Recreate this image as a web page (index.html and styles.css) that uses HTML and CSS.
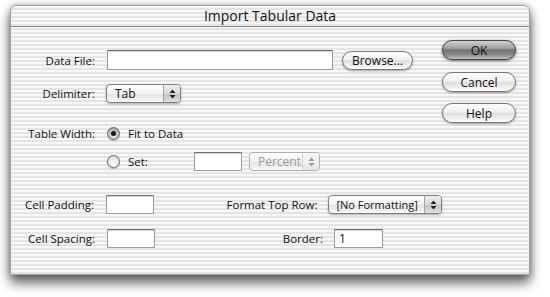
FILE: index.html
```html
<!DOCTYPE html>
<html>
<head>
<meta charset="utf-8">
<link rel="stylesheet" href="styles.css">
</head>
<body>
<div class="window">
  <div class="titlebar">Import Tabular Data</div>
  <div class="content">
    <div class="form">
      <div class="row r1">
        <span class="label">Data File:</span>
        <span class="field wide"></span>
        <span class="btn browse">Browse...</span>
      </div>
      <div class="row r2">
        <span class="label">Delimiter:</span>
        <span class="popup delim"><span class="ptext">Tab</span><span class="arrows"><svg width="7" height="10" viewBox="0 0 7 10"><path d="M3.5 0.5 L6.5 4 L0.5 4 Z M0.5 6 L6.5 6 L3.5 9.5 Z" fill="#222"/></svg></span></span>
      </div>
      <div class="row r3">
        <span class="label">Table Width:</span>
        <span class="radio on"></span>
        <span class="rtext">Fit to Data</span>
      </div>
      <div class="row r4">
        <span class="label"></span>
        <span class="radio"></span>
        <span class="rtext settext">Set:</span>
        <span class="field small"></span>
        <span class="popup pct disabled"><span class="ptext">Percent</span><span class="arrows"><svg width="7" height="10" viewBox="0 0 7 10"><path d="M3.5 0.5 L6.5 4 L0.5 4 Z M0.5 6 L6.5 6 L3.5 9.5 Z" fill="#999"/></svg></span></span>
      </div>
      <div class="row r5">
        <span class="label">Cell Padding:</span>
        <span class="field small"></span>
        <span class="label2">Format Top Row:</span>
        <span class="popup fmt"><span class="ptext">[No Formatting]</span><span class="arrows"><svg width="7" height="10" viewBox="0 0 7 10"><path d="M3.5 0.5 L6.5 4 L0.5 4 Z M0.5 6 L6.5 6 L3.5 9.5 Z" fill="#222"/></svg></span></span>
      </div>
      <div class="row r6">
        <span class="label">Cell Spacing:</span>
        <span class="field small"></span>
        <span class="label2 lb">Border:</span>
        <span class="field small val">1</span>
      </div>
    </div>
    <div class="buttons">
      <span class="btn big default">OK</span>
      <span class="btn big cancel">Cancel</span>
      <span class="btn big help">Help</span>
    </div>
  </div>
</div>
</body>
</html>
```
FILE: styles.css
```css
* { box-sizing: border-box; }
html, body { margin: 0; padding: 0; background: #fff; }
body {
  width: 550px; height: 297px; overflow: hidden;
  font-family: "Open Sans", "DejaVu Sans", sans-serif;
  font-size: 11.5px; color: #111;
}
.window {
  margin: 5px 0 0 10px;
  width: 520px; height: 270px;
  border: 1px solid #a0a0a0;
  border-radius: 6px 6px 0 0;
  background: repeating-linear-gradient(to bottom, #f7f7f7 0 2px, #e4e4e4 2px 4px);
  box-shadow: 0 8px 12px rgba(0,0,0,0.6), 0 0 7px rgba(0,0,0,0.3);
}
.titlebar {
  height: 21px;
  border-bottom: 1px solid #8a8a8a;
  text-align: center;
  font-size: 14px;
  line-height: 20px;
  color: #111;
}
.content { display: flex; padding-left: 9px; }
.form { width: 422px; display: flex; flex-direction: column; }
.row { display: flex; align-items: center; height: 19px; }
.r1 { margin-top: 23px; height: 20px; }
.r2 { margin-top: 14px; }
.r3 { margin-top: 21px; }
.r4 { margin-top: 9px; }
.r5 { margin-top: 24px; }
.r6 { margin-top: 15px; }
.label { width: 75px; text-align: right; margin-right: 12px; white-space: nowrap; }
.label2 { width: 166px; text-align: right; margin-right: 11px; white-space: nowrap; }
.lb { width: 168px; }
.field {
  display: block; height: 19px; background: #fff;
  border: 1px solid #9c9c9c; border-top-color: #6f6f6f;
  box-shadow: inset 0 1px 1px rgba(0,0,0,0.18);
  padding: 1px 4px; line-height: 15px; font-size: 12px;
}
.wide { width: 226px; height: 20px; }
.small { width: 48px; }
.r4 .small { margin-left: 46px; }
.r6 .val { width: 49px; }
.btn {
  display: flex; align-items: center; justify-content: center;
  border: 1px solid #777; border-radius: 10px;
  background: linear-gradient(to bottom, #fdfdfd 0%, #f0f0f0 45%, #dedede 52%, #f2f2f2 85%, #ffffff 100%);
  box-shadow: 0 1px 2px rgba(0,0,0,0.35);
  color: #111;
}
.browse { width: 71px; height: 19px; margin-left: 9px; font-size: 12px; }
.buttons { width: 74px; display: flex; flex-direction: column; padding-top: 13px; }
.big { height: 20px; font-size: 12px; }
.cancel { margin-top: 12px; }
.help { margin-top: 11px; }
.default {
  border-color: #444;
  background: linear-gradient(to bottom, #cfcfcf 0%, #a0a0a0 40%, #747474 52%, #888 75%, #c0c0c0 100%);
  box-shadow: 0 1px 3px rgba(0,0,0,0.55);
}
.popup {
  display: flex; height: 19px;
  border: 1px solid #7f7f7f; border-radius: 4px;
  background: linear-gradient(to bottom, #ffffff 0%, #f2f2f2 50%, #e4e4e4 55%, #f8f8f8 100%);
  box-shadow: 0 1px 2px rgba(0,0,0,0.3);
  overflow: hidden;
}
.ptext { flex: 1; padding-left: 8px; line-height: 17px; font-size: 12px; white-space: nowrap; }
.fmt .ptext { padding-left: 7px; font-size: 11px; }
.arrows {
  width: 17px; border-left: 1px solid #a5a5a5;
  display: flex; align-items: center; justify-content: center;
  background: linear-gradient(to bottom, #eeeeee 0%, #d8d8d8 50%, #c4c4c4 55%, #e0e0e0 100%);
}
.delim { width: 75px; margin-left: -1px; }
.pct { width: 71px; margin-left: 7px; }
.fmt { width: 115px; }
.disabled { border-color: #b0b0b0; box-shadow: none; }
.disabled .ptext { color: #9a9a9a; }
.disabled .arrows { border-left-color: #d0d0d0; background: linear-gradient(to bottom, #f6f6f6, #e8e8e8); }
.radio {
  width: 13px; height: 13px; border-radius: 50%;
  border: 1px solid #6a6a6a;
  background: radial-gradient(circle at 50% 70%, #ffffff 0%, #e6e6e6 55%, #bdbdbd 100%);
  box-shadow: 0 1px 1px rgba(0,0,0,0.25);
  position: relative;
}
.radio.on {
  background: radial-gradient(circle at 50% 70%, #e8e8e8 0%, #b8b8b8 60%, #8a8a8a 100%);
}
.radio.on::after {
  content: ""; position: absolute; left: 3px; top: 3px;
  width: 5px; height: 5px; border-radius: 50%; background: #1a1a1a;
}
.rtext { margin-left: 8px; }
.settext { width: 20px; }
```
